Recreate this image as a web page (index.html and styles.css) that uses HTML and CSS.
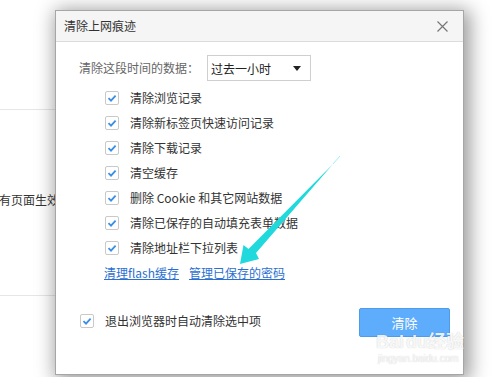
FILE: index.html
```html
<!DOCTYPE html>
<html lang="zh-CN">
<head>
<meta charset="utf-8">
<title>清除上网痕迹</title>
<link rel="stylesheet" href="styles.css">
</head>
<body>
<div class="page">
  <div class="bg">
    <div class="bg-sec1"></div>
    <div class="bg-sec2"><span class="bg-text">有页面生效</span></div>
  </div>

  <div class="dialog">
    <div class="dlg-header">
      <span class="dlg-title">清除上网痕迹</span>
      <svg class="dlg-close" width="11" height="11" viewBox="0 0 11 11"><path d="M0.5 0.5 L10.5 10.5 M10.5 0.5 L0.5 10.5" stroke="#777" stroke-width="1.2" fill="none"/></svg>
    </div>
    <div class="dlg-body">
      <div class="time-row">
        <span class="time-label">清除这段时间的数据：</span>
        <div class="select">
          <span>过去一小时</span>
          <svg width="8" height="5" viewBox="0 0 8 5"><path d="M0 0 H8 L4 5 Z" fill="#222"/></svg>
        </div>
      </div>
      <ul class="opts">
        <li class="opt"><span class="cb"><svg width="12" height="12" viewBox="0 0 12 12"><path d="M2.5 6.2 L5 8.6 L9.6 3.6" stroke="#3a8ee6" stroke-width="1.8" fill="none"/></svg></span>清除浏览记录</li>
        <li class="opt"><span class="cb"><svg width="12" height="12" viewBox="0 0 12 12"><path d="M2.5 6.2 L5 8.6 L9.6 3.6" stroke="#3a8ee6" stroke-width="1.8" fill="none"/></svg></span>清除新标签页快速访问记录</li>
        <li class="opt"><span class="cb"><svg width="12" height="12" viewBox="0 0 12 12"><path d="M2.5 6.2 L5 8.6 L9.6 3.6" stroke="#3a8ee6" stroke-width="1.8" fill="none"/></svg></span>清除下载记录</li>
        <li class="opt"><span class="cb"><svg width="12" height="12" viewBox="0 0 12 12"><path d="M2.5 6.2 L5 8.6 L9.6 3.6" stroke="#3a8ee6" stroke-width="1.8" fill="none"/></svg></span>清空缓存</li>
        <li class="opt"><span class="cb"><svg width="12" height="12" viewBox="0 0 12 12"><path d="M2.5 6.2 L5 8.6 L9.6 3.6" stroke="#3a8ee6" stroke-width="1.8" fill="none"/></svg></span>删除 Cookie 和其它网站数据</li>
        <li class="opt"><span class="cb"><svg width="12" height="12" viewBox="0 0 12 12"><path d="M2.5 6.2 L5 8.6 L9.6 3.6" stroke="#3a8ee6" stroke-width="1.8" fill="none"/></svg></span>清除已保存的自动填充表单数据</li>
        <li class="opt"><span class="cb"><svg width="12" height="12" viewBox="0 0 12 12"><path d="M2.5 6.2 L5 8.6 L9.6 3.6" stroke="#3a8ee6" stroke-width="1.8" fill="none"/></svg></span>清除地址栏下拉列表</li>
      </ul>
      <div class="links">
        <a class="link" href="#">清理flash缓存</a>
        <a class="link" href="#">管理已保存的密码</a>
      </div>
      <div class="footer">
        <div class="auto">
          <span class="cb"><svg width="12" height="12" viewBox="0 0 12 12"><path d="M2.5 6.2 L5 8.6 L9.6 3.6" stroke="#3a8ee6" stroke-width="1.8" fill="none"/></svg></span>
          <span>退出浏览器时自动清除选中项</span>
        </div>
        <button class="btn">清除</button>
      </div>
    </div>
  </div>

  <svg class="arrow" width="494" height="377" viewBox="0 0 494 377">
    <path d="M340 156 L333 164" stroke="#9ff0f2" stroke-width="1" fill="none"/>
    <polygon points="333,164 256,253 259,259 240,264 243.5,245 248.5,249" fill="#1fd9dd"/>
  </svg>

  <div class="watermark">
    <div class="wm-logo">Bai<span class="wm-du">du</span>经验</div>
    <div class="wm-url">jingyan.baidu.com</div>
  </div>
</div>
</body>
</html>
```

FILE: styles.css
```css
* { box-sizing: border-box; }
html, body { margin: 0; padding: 0; }
body {
  width: 494px;
  height: 377px;
  overflow: hidden;
  background: #fff;
  font-family: "Noto Sans CJK SC", "Noto Sans", sans-serif;
  font-size: 12px;
  color: #333;
}
.page {
  position: relative;
  width: 494px;
  height: 377px;
  overflow: hidden;
}
.bg {
  width: 300px;
}
.bg-sec1 {
  height: 110px;
  border-bottom: 1px solid #e6e6e6;
}
.bg-sec2 {
  height: 186px;
  border-bottom: 1px solid #e6e6e6;
  padding-top: 82px;
}
.bg-text {
  display: block;
  margin-left: -1px;
  line-height: 16px;
  color: #333;
}

.dialog {
  position: absolute;
  left: 55px;
  top: 10px;
  width: 409px;
  height: 365px;
  background: #fff;
  border: 1px solid #a6a6a6;
  box-shadow: 3px 3px 18px 3px rgba(0,0,0,0.4);
}
.dlg-header {
  height: 31px;
  background: #f5f5f5;
  border-bottom: 1px solid #dcdcdc;
  display: flex;
  align-items: center;
  justify-content: space-between;
  padding: 0 15px 0 8px;
}
.dlg-title {
  line-height: 16px;
  color: #333;
}
.dlg-close { display: block; }

.dlg-body {
  padding: 13px 0 0 23px;
}
.time-row {
  display: flex;
  align-items: center;
  height: 26px;
}
.time-label {
  color: #666;
  width: 128px;
  line-height: 16px;
}
.select {
  width: 104px;
  height: 26px;
  border: 1px solid #cfcfcf;
  display: flex;
  align-items: center;
  justify-content: space-between;
  padding: 0 9px 0 3px;
  color: #222;
}
.select svg { display: block; }

.opts {
  list-style: none;
  margin: 4px 0 0 26px;
  padding: 0;
}
.opt {
  height: 25px;
  display: flex;
  align-items: center;
  gap: 11px;
  line-height: 16px;
}
.cb {
  width: 14px;
  height: 14px;
  border: 1px solid #c9c9c9;
  border-radius: 2px;
  background: #fff;
  display: flex;
  align-items: center;
  justify-content: center;
  flex: none;
}
.cb svg { display: block; }

.links {
  height: 25px;
  margin-left: 25px;
  display: flex;
  align-items: center;
  gap: 10px;
}
.link {
  color: #2b6fd1;
  text-decoration: underline;
  line-height: 16px;
}

.footer {
  margin-top: 23px;
  display: flex;
  align-items: center;
  justify-content: space-between;
  padding-right: 13px;
}
.auto {
  display: flex;
  align-items: center;
  gap: 11px;
  margin-left: 1px;
  margin-top: -4px;
  line-height: 16px;
}
.btn {
  width: 91px;
  height: 29px;
  background: #5eadfc;
  border: 1px solid #4e9ce9;
  border-radius: 2px;
  color: #fff;
  font-family: "Noto Sans CJK SC", sans-serif;
  font-size: 13px;
  padding: 0;
}

.arrow {
  position: absolute;
  left: 0;
  top: 0;
  pointer-events: none;
}

.watermark {
  position: absolute;
  left: 376px;
  top: 332px;
  color: rgba(255,255,255,0.9);
  text-shadow: 0 0 1px rgba(0,0,0,0.25);
  font-family: "Liberation Sans", "Noto Sans CJK SC", sans-serif;
  pointer-events: none;
}
.wm-logo {
  font-size: 18px;
  font-weight: bold;
  line-height: 20px;
}
.wm-du { margin-left: 2px; }
.wm-url {
  font-size: 10px;
  line-height: 12px;
  margin-top: 1px;
  margin-left: 2px;
}
```
